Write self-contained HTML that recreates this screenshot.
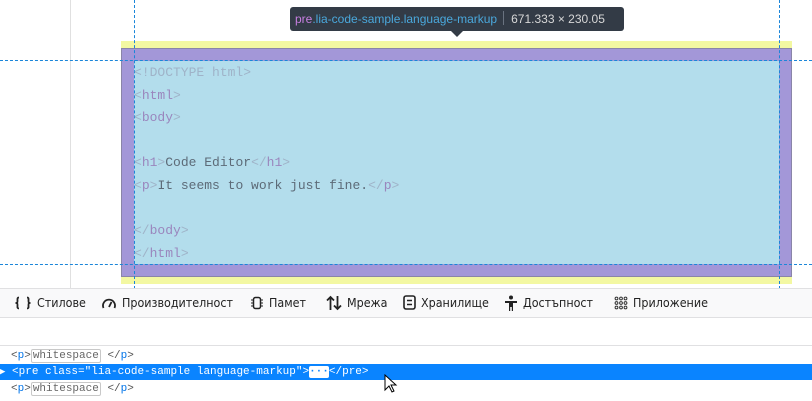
<!DOCTYPE html>
<html><head><style>
body{margin:0;width:812px;height:401px;overflow:hidden;background:#fff;position:relative;font-family:"Liberation Sans",sans-serif}
.a{position:absolute}
.code{font-family:"Liberation Mono",monospace;font-size:13px;color:#5d6b78;white-space:pre}
.t{color:#9a86bd}.g{color:#9fb3c8}
.tb .it{position:absolute;top:0;height:27px;display:flex;align-items:center;gap:5px;font-family:"DejaVu Sans Condensed","Liberation Sans",sans-serif;font-size:12.4px;color:#222}
.tree{font-family:"Liberation Mono",monospace;font-size:11px;white-space:pre}
.ws{border:1px solid #c8c8c8;border-radius:2px;padding:0 1px;color:#666}
</style></head><body>
<div class="a" style="left:70px;top:0;width:1px;height:289px;background:#e0e0e0"></div>
<div class="a" style="left:121px;top:41px;width:671px;height:243px;background:#f3f8a2"></div>
<div class="a" style="left:121px;top:48px;width:671px;height:229px;background:#a397d8;border:1px solid #8a85a8;box-sizing:border-box"></div>
<div class="a" style="left:134px;top:61px;width:645px;height:203px;background:#b3ddec"></div>
<div class="a" style="left:134px;top:0;height:289px;border-left:1px dashed #1b86d9"></div>
<div class="a" style="left:779px;top:0;height:289px;border-left:1px dashed #1b86d9"></div>
<div class="a" style="left:0;top:60px;width:812px;border-top:1px dashed #1b86d9"></div>
<div class="a" style="left:0;top:264px;width:812px;border-top:1px dashed #1b86d9"></div>
<div class="a code" style="left:134px;top:62px;line-height:22.6px"><span class="g">&lt;!DOCTYPE html&gt;</span>
<span class="g">&lt;</span><span class="t">html</span><span class="g">&gt;</span>
<span class="g">&lt;</span><span class="t">body</span><span class="g">&gt;</span>

<span class="g">&lt;</span><span class="t">h1</span><span class="g">&gt;</span>Code Editor<span class="g">&lt;/</span><span class="t">h1</span><span class="g">&gt;</span>
<span class="g">&lt;</span><span class="t">p</span><span class="g">&gt;</span>It seems to work just fine.<span class="g">&lt;/</span><span class="t">p</span><span class="g">&gt;</span>

<span class="g">&lt;/</span><span class="t">body</span><span class="g">&gt;</span>
<span class="g">&lt;/</span><span class="t">html</span><span class="g">&gt;</span></div>
<div class="a" style="left:290px;top:7px;width:334px;height:24px;background:#333b46;border-radius:3px;font-size:12px;line-height:24px;color:#d8d8d8"><span style="margin-left:5px;color:#c77fe0">pre</span><span style="color:#4aa8dc">.lia-code-sample.language-markup</span><span style="display:inline-block;width:1px;height:14px;background:#6a7380;margin:0 7px 0 6px;vertical-align:-2px"></span>671.333 × 230.05</div>
<div class="a" style="left:451px;top:31px;border:6px solid transparent;border-top-color:#333b46;border-bottom:0"></div>
<div class="a tb" style="left:0;top:288px;width:812px;height:30px;background:#f9f9fa;border-top:1px solid #e0e0e2;border-bottom:1px solid #e0e0e2;box-sizing:border-box">
<div class="it" style="left:14px"><svg width="18" height="14" viewBox="0 0 18 14"><path d="M5 1.5C3 1.5 3.5 3 3.5 5S3 7 1.5 7C3 7 3.5 7 3.5 9S3 12.5 5 12.5M13 1.5C15 1.5 14.5 3 14.5 5S15 7 16.5 7C15 7 14.5 7 14.5 9S15 12.5 13 12.5" fill="none" stroke="#222" stroke-width="1.8"/></svg>Стилове</div>
<div class="it" style="left:101px"><svg width="16" height="14" viewBox="0 0 16 14"><path d="M2.5 12A6 6 0 1 1 13.5 12" fill="none" stroke="#222" stroke-width="1.8"/><path d="M8 11L10.5 6" stroke="#222" stroke-width="1.8"/></svg>Производителност</div>
<div class="it" style="left:250px"><svg width="14" height="14" viewBox="0 0 14 14"><rect x="3.5" y="1.5" width="7" height="11" rx="2" fill="none" stroke="#222" stroke-width="1.5"/><path d="M1 4h2M1 7h2M1 10h2M11 4h2M11 7h2M11 10h2" stroke="#222"/></svg>Памет</div>
<div class="it" style="left:326px"><svg width="16" height="16" viewBox="0 0 16 16"><path d="M4.5 15V2M1 5.5L4.5 2 8 5.5M11.5 1v13M8 10.5l3.5 3.5 3.5-3.5" fill="none" stroke="#222" stroke-width="1.8"/></svg>Мрежа</div>
<div class="it" style="left:403px"><svg width="13" height="15" viewBox="0 0 13 15"><rect x="1" y="1" width="11" height="13" rx="2" fill="none" stroke="#222" stroke-width="1.6"/><path d="M4 5.5h5M4 9.5h5" stroke="#222" stroke-width="1.4"/></svg>Хранилище</div>
<div class="it" style="left:504px"><svg width="14" height="16" viewBox="0 0 14 16"><circle cx="7" cy="2.5" r="2" fill="#222"/><path d="M1 6h12v2H9v8H7.8v-4h-1.6v4H5V8H1z" fill="#222"/></svg>Достъпност</div>
<div class="it" style="left:614px"><svg width="14" height="14" viewBox="0 0 14 14" fill="none" stroke="#333" stroke-width="1"><circle cx="2.5" cy="2.5" r="1.4"/><circle cx="7" cy="2.5" r="1.4"/><circle cx="11.5" cy="2.5" r="1.4"/><circle cx="2.5" cy="7" r="1.4"/><circle cx="7" cy="7" r="1.4"/><circle cx="11.5" cy="7" r="1.4"/><circle cx="2.5" cy="11.5" r="1.4"/><circle cx="7" cy="11.5" r="1.4"/><circle cx="11.5" cy="11.5" r="1.4"/></svg>Приложение</div>
</div>
<div class="a" style="left:0;top:345px;width:812px;height:1px;background:#e0e0e2"></div>
<div class="a tree" style="left:11px;top:349px;line-height:15px;color:#555">&lt;<span style="color:#0074e8">p</span>&gt;<span class="ws">whitespace</span> &lt;/<span style="color:#0074e8">p</span>&gt;</div>
<div class="a tree" style="left:0;top:364px;width:812px;height:16px;background:#0a84ff;color:#fff;line-height:16px"><span style="font-size:9px">▶</span> &lt;pre class="lia-code-sample language-markup"&gt;<span style="background:#fff;color:#0a84ff;border-radius:2px;font-weight:bold">···</span>&lt;/pre&gt;</div>
<div class="a tree" style="left:11px;top:382px;line-height:15px;color:#555">&lt;<span style="color:#0074e8">p</span>&gt;<span class="ws">whitespace</span> &lt;/<span style="color:#0074e8">p</span>&gt;</div>
<svg class="a" style="left:384px;top:374px" width="14" height="20" viewBox="0 0 14 20"><path d="M1 1v15l4-4 3 6 2-1-3-6h5z" fill="#fff" stroke="#000" stroke-width="1"/></svg>
</body></html>
